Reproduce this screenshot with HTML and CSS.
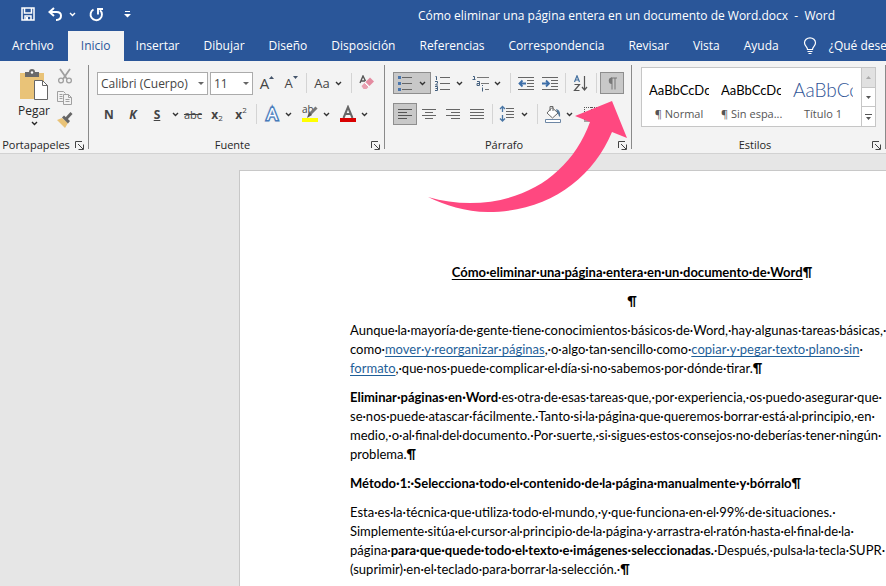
FILE: index.html
```html
<!DOCTYPE html>
<html lang="es">
<head>
    <meta charset="UTF-8">
    <title>Cómo eliminar una página entera en un documento de Word.docx - Word</title>
    <link rel="stylesheet" href="styles.css">
</head>
<body>
    <!-- Iconos compartidos -->
    <svg class="defs" width="0" height="0">
        <symbol id="chevron" viewBox="0 0 7 5"><path d="M1 1l2.5 2.5L6 1" fill="none" stroke="currentColor" stroke-width="1.4"/></symbol>
        <symbol id="launcher" viewBox="0 0 9 9"><path d="M.5 7V.5H7M3 3l5 5M8.5 3.5v5h-5" fill="none" stroke="#444"/></symbol>
    </svg>

    <header class="header">
        <div class="titlebar">
            <div class="quick">
                <button class="quick-btn" aria-label="Guardar"><svg width="14" height="14" viewBox="0 0 14 14"><path d="M1 1h12v12H1zM3.500 1v5h7V1M4 13V9h6v4" fill="none" stroke="#fff" stroke-width="1.500"/><path d="M5 10h2v3H5z" fill="#fff"/></svg></button>
                <button class="quick-btn undo" aria-label="Deshacer"><svg width="15" height="14" viewBox="0 0 15 14"><path d="M6 1L1.500 5 6 9M2 5h6.500c6 0 6 7.500 0 8H8" fill="none" stroke="#fff" stroke-width="2"/></svg><svg class="chev"><use href="#chevron"/></svg></button>
                <button class="quick-btn" aria-label="Repetir"><svg width="15" height="15" viewBox="0 0 15 15"><path d="M4.500 2.500A5.700 5.700 0 1 0 11 3.200M9 7.500V2h5" fill="none" stroke="#fff" stroke-width="1.900"/></svg></button>
                <button class="quick-btn" aria-label="Personalizar"><svg width="7" height="7" viewBox="0 0 7 7"><path d="M1 0h5v1H1zM0 3h7L3.500 6.500z" fill="#fff"/></svg></button>
            </div>
            <span class="doc-name">Cómo eliminar una página entera en un documento de Word.docx&nbsp; -&nbsp; Word</span>
        </div>
        <nav class="tabs">
            <button class="tab file">Archivo</button>
            <button class="tab active">Inicio</button>
            <button class="tab">Insertar</button>
            <button class="tab">Dibujar</button>
            <button class="tab">Diseño</button>
            <button class="tab">Disposición</button>
            <button class="tab">Referencias</button>
            <button class="tab">Correspondencia</button>
            <button class="tab">Revisar</button>
            <button class="tab">Vista</button>
            <button class="tab">Ayuda</button>
            <button class="tab help"><svg width="14" height="18" viewBox="0 0 14 18"><path d="M4.500 12.500C4.500 9.500 1.500 9 1.500 5.800a5.500 5 0 0 1 11 0c0 3.200-3 3.700-3 6.700zM4.500 14.500h5M5.500 16.500h3" fill="none" stroke="#fff" stroke-width="1.200"/></svg>¿Qué desea hacer?</button>
        </nav>
    </header>

    <section class="ribbon">
        <div class="group clipboard">
            <div class="clip-tools">
                <button class="paste">
                    <svg width="30" height="32" viewBox="0 0 30 32"><path d="M1 4h24v26H1z" fill="#e9c378"/><path d="M6 3h4a3 3 0 0 1 6 0h4v5H6z" fill="#6a6a6a"/><circle cx="13" cy="3.500" r="1.200" fill="#fff"/><path d="M15.500 11.500h8l5 5v14h-13z" fill="#fff" stroke="#666"/><path d="M23.500 11.500v5h5" fill="none" stroke="#666"/></svg>
                    Pegar
                    <svg class="chev"><use href="#chevron"/></svg>
                </button>
                <div class="clip-side">
                    <button class="btn" aria-label="Cortar"><svg width="16" height="16" viewBox="0 0 16 16"><path d="M3 1l7 10M13 1L6 11" stroke="#a0a0a0" stroke-width="1.800"/><circle cx="4" cy="12.500" r="2.400" fill="none" stroke="#a0a0a0" stroke-width="1.300"/><circle cx="12" cy="12.500" r="2.400" fill="none" stroke="#a0a0a0" stroke-width="1.300"/></svg></button>
                    <button class="btn" aria-label="Copiar"><svg width="16" height="16" viewBox="0 0 16 16"><path d="M6 11.500H.500v-10h6l2 2M2.500 4.500h3M2.500 6.500h3M2.500 8.500h3" fill="none" stroke="#a0a0a0"/><path d="M6.500 4.500h5l3 3v7h-8z" fill="#f3f3f3" stroke="#a0a0a0"/><path d="M11.500 4.500v3h3M8.500 9.500h4M8.500 11.500h4" fill="none" stroke="#a0a0a0"/></svg></button>
                    <button class="btn" aria-label="Copiar formato"><svg width="16" height="16" viewBox="0 0 16 16"><path d="M0 8l5-2 6 5-3 5z" fill="#e9c378"/><path d="M5 5.500l2-2 6 5.500-2 2.500z" fill="#666"/><path d="M9 7l5.500-6" stroke="#666" stroke-width="2.800"/></svg></button>
                </div>
            </div>
            <div class="group-foot"><span>Portapapeles</span><button class="launch" aria-label="Más opciones"><svg width="9" height="9"><use href="#launcher"/></svg></button></div>
        </div>

        <div class="group font">
            <div class="row">
                <label class="combo combo-font"><select aria-label="Fuente"><option>Calibri (Cuerpo)</option></select></label>
                <label class="combo combo-size"><select aria-label="Tamaño"><option>11</option></select></label>
                <button class="btn grow">A<svg width="5" height="3"><path d="M0 3l2.500-3L5 3z" fill="#44546a"/></svg></button>
                <button class="btn grow shrink">A<svg width="5" height="3"><path d="M0 0l2.500 3L5 0z" fill="#44546a"/></svg></button>
                <i class="sep"></i>
                <button class="split case"><span class="ico">Aa</span><svg class="chev"><use href="#chevron"/></svg></button>
                <i class="sep"></i>
                <button class="btn" aria-label="Borrar formato"><svg width="16" height="16" viewBox="0 0 16 16"><path d="M1 8l3-7 2.500 5M2 6h4" fill="none" stroke="#555" stroke-width="1.400"/><path d="M11 2.500l4 4-4.500 4.500-4-4z" fill="#e48ba0"/><path d="M6 7.500l4 4-2.500 2.500h-3L2.500 11z" fill="#e8a0b0"/><path d="M5.500 7.500l4.500 4.500" stroke="#fff"/></svg></button>
            </div>
            <div class="row">
                <button class="btn"><b>N</b></button>
                <button class="btn"><b><em>K</em></b></button>
                <button class="btn under"><b>S</b></button>
                <button class="drop" aria-label="Subrayado"><svg class="chev"><use href="#chevron"/></svg></button>
                <button class="btn strike">abc</button>
                <button class="btn"><b>x</b><sub>2</sub></button>
                <button class="btn"><b>x</b><sup>2</sup></button>
                <i class="sep"></i>
                <button class="split"><span class="ico effect">A</span><svg class="chev"><use href="#chevron"/></svg></button>
                <button class="split" aria-label="Resaltado"><svg width="24" height="18" viewBox="0 0 24 18"><text x="4" y="8" class="mini">ab</text><path d="M4 13h16v4H4z" fill="#ff0"/><path d="M18.500 2.500l-7 7" stroke="#777" stroke-width="3"/><path d="M11 7l3 3-5 3z" fill="#555"/></svg><svg class="chev"><use href="#chevron"/></svg></button>
                <button class="split" aria-label="Color de fuente"><svg width="24" height="18" viewBox="0 0 24 18"><path d="M7.500 13L12 2l4.500 11M9 9h6" fill="none" stroke="#666" stroke-width="2"/><path d="M4 13h16v4H4z" fill="#d90000"/></svg><svg class="chev"><use href="#chevron"/></svg></button>
            </div>
            <div class="group-foot"><span>Fuente</span><button class="launch" aria-label="Más opciones"><svg width="9" height="9"><use href="#launcher"/></svg></button></div>
        </div>

        <div class="group paragraph">
            <div class="row">
                <button class="split on" aria-label="Viñetas"><svg width="24" height="16" viewBox="0 0 24 16"><path d="M8 2.500h10M8 8.500h10M8 14.500h10" stroke="#666"/><path d="M4 1h3v3H4zM4 7h3v3H4zM4 13h3v3H4z" fill="#4a76ad"/></svg><svg class="chev"><use href="#chevron"/></svg></button>
                <button class="split" aria-label="Numeración"><svg width="24" height="16" viewBox="0 0 24 16"><path d="M9 2.500h10M9 8.500h10M9 14.500h10" stroke="#666"/><path d="M4.500 1.500h1V5M4 6.500h2.500v1.500L4.500 10H7M4 11.500h2.500v4H4M4.500 13.500h2" fill="none" stroke="#44607f"/></svg><svg class="chev"><use href="#chevron"/></svg></button>
                <button class="split" aria-label="Lista multinivel"><svg width="24" height="17" viewBox="0 0 24 17"><path d="M8 2.500h12M12 8.500h8M16 14.500h4" stroke="#777"/><path d="M4 1.500h1.500V4M3.500 4.500h3M8 6.500h2.500v4H8v-2h2M13.500 12.500v4M13.500 10v1" fill="none" stroke="#44607f"/></svg><svg class="chev"><use href="#chevron"/></svg></button>
                <i class="sep"></i>
                <button class="btn" aria-label="Disminuir sangría"><svg width="16" height="14" viewBox="0 0 16 14"><path d="M0 1.500h16M9 4.500h7M9 7.500h7M9 10.500h7M0 13.500h16" stroke="#666"/><path d="M8 7.500H2M4.500 4.500l-3 3 3 3" fill="none" stroke="#3d6ea8" stroke-width="1.800"/></svg></button>
                <button class="btn" aria-label="Aumentar sangría"><svg width="16" height="14" viewBox="0 0 16 14"><path d="M0 1.500h16M9 4.500h7M9 7.500h7M9 10.500h7M0 13.500h16" stroke="#666"/><path d="M0 7.500h6M4 4.500l3 3-3 3" fill="none" stroke="#3d6ea8" stroke-width="1.800"/></svg></button>
                <i class="sep"></i>
                <button class="btn" aria-label="Ordenar"><svg width="16" height="17" viewBox="0 0 16 17"><path d="M1.500 7L4 .8 6.500 7M2.300 5h3.400" fill="none" stroke="#44709f" stroke-width="1.200"/><path d="M1.500 9.500h5l-5 6h5" fill="none" stroke="#555" stroke-width="1.200"/><path d="M11.500 1v14M9 12l2.500 3 2.500-3" fill="none" stroke="#555" stroke-width="1.200"/></svg></button>
                <i class="sep"></i>
                <button class="btn on" aria-label="Mostrar todo"><svg width="12" height="13" viewBox="0 0 12 13"><path d="M6 1v11.500M9 1v11.500M5 1h6" fill="none" stroke="#777"/><path d="M6 .500v6.500a3.200 3.200 0 0 1 0-6.500z" fill="#777"/></svg></button>
            </div>
            <div class="row">
                <button class="btn on" aria-label="Alinear a la izquierda"><svg width="14" height="12" viewBox="0 0 14 12"><path d="M0 1.500h14M0 4.500h9M0 7.500h14M0 10.500h9" stroke="#555"/></svg></button>
                <button class="btn" aria-label="Centrar"><svg width="14" height="12" viewBox="0 0 14 12"><path d="M0 1.500h14M3 4.500h8M0 7.500h14M3 10.500h8" stroke="#666"/></svg></button>
                <button class="btn" aria-label="Alinear a la derecha"><svg width="14" height="12" viewBox="0 0 14 12"><path d="M0 1.500h14M5 4.500h9M0 7.500h14M5 10.500h9" stroke="#666"/></svg></button>
                <button class="btn" aria-label="Justificar"><svg width="14" height="12" viewBox="0 0 14 12"><path d="M0 1.500h14M0 4.500h14M0 7.500h14M0 10.500h14" stroke="#666"/></svg></button>
                <i class="sep"></i>
                <button class="split" aria-label="Interlineado"><svg width="24" height="18" viewBox="0 0 24 18"><path d="M10 3.500h8M10 6.500h8M10 9.500h8M10 12.500h8" stroke="#666"/><path d="M6.500 2v5M4 4l2.500-2.500L9 4M6.500 10v6M4 13.500L6.500 16 9 13.500" fill="none" stroke="#4a76a5" stroke-width="1.300"/></svg><svg class="chev"><use href="#chevron"/></svg></button>
                <i class="sep"></i>
                <button class="split" aria-label="Sombreado"><svg width="24" height="18" viewBox="0 0 24 18"><path d="M11 2.500l6 5.500-5.500 5L6 8zM9 6V1.500h3V6" fill="#fff" stroke="#666"/><path d="M15 4c4 1 4.500 4 4 8-2-1-1-3-3-5z" fill="#54789a"/><path d="M4.500 14.500h15v3h-15z" fill="#fff" stroke="#6d87a5"/></svg><svg class="chev"><use href="#chevron"/></svg></button>
                <button class="split" aria-label="Bordes"><svg width="24" height="16" viewBox="0 0 24 16"><path d="M5 1.500h14M5 8.500h14M5.500 1v14M12.500 1v14" stroke="#555" stroke-dasharray="1 1"/><path d="M5 15h14" stroke="#555"/></svg></button>
            </div>
            <div class="group-foot"><span>Párrafo</span><button class="launch" aria-label="Más opciones"><svg width="9" height="9"><use href="#launcher"/></svg></button></div>
        </div>

        <div class="group styles">
            <div class="gallery">
                <div class="cards">
                    <button class="card"><span class="sample">AaBbCcDc</span><span class="name">¶ Normal</span></button>
                    <button class="card"><span class="sample">AaBbCcDc</span><span class="name">¶ Sin espa...</span></button>
                    <button class="card"><span class="sample big">AaBbCc</span><span class="name">Título 1</span></button>
                </div>
                <div class="scroll">
                    <button class="scroll-btn off" aria-label="Subir"><svg width="5" height="3"><path d="M0 3l2.500-3L5 3z" fill="#aaa"/></svg></button>
                    <button class="scroll-btn" aria-label="Bajar"><svg width="5" height="3"><path d="M0 0l2.500 3L5 0z" fill="#555"/></svg></button>
                    <button class="scroll-btn" aria-label="Más estilos"><svg width="7" height="6"><path d="M0 0h7v1H0zM1 3l2.500 3L6 3z" fill="#555"/></svg></button>
                </div>
            </div>
            <div class="group-foot"><span>Estilos</span><button class="launch" aria-label="Más opciones"><svg width="9" height="9"><use href="#launcher"/></svg></button></div>
        </div>
    </section>

    <main class="workspace">
        <article class="page">
            <h1><u>Cómo·eliminar·una·página·entera·en·un·documento·de·Word</u>¶</h1>
            <p class="center"><b>¶</b></p>
            <p>Aunque·la·mayoría·de·gente·tiene·conocimientos·básicos·de·Word,·hay·algunas·tareas·básicas,·<br>como·<a href="#">mover·y·reorganizar·páginas</a>,·o·algo·tan·sencillo·como·<a href="#">copiar·y·pegar·texto·plano·sin</a>·<br><a href="#">formato</a>,·que·nos·puede·complicar·el·día·si·no·sabemos·por·dónde·tirar.<b>¶</b></p>
            <p><b>Eliminar·páginas·en·Word</b>·es·otra·de·esas·tareas·que,·por·experiencia,·os·puedo·asegurar·que·<br>se·nos·puede·atascar·fácilmente.·Tanto·si·la·página·que·queremos·borrar·está·al·principio,·en·<br>medio,·o·al·final·del·documento.·Por·suerte,·si·sigues·estos·consejos·no·deberías·tener·ningún·<br>problema.<b>¶</b></p>
            <p><b>Método·1:·Selecciona·todo·el·contenido·de·la·página·manualmente·y·bórralo¶</b></p>
            <p>Esta·es·la·técnica·que·utiliza·todo·el·mundo,·y·que·funciona·en·el·99%·de·situaciones.·<br>Simplemente·sitúa·el·cursor·al·principio·de·la·página·y·arrastra·el·ratón·hasta·el·final·de·la·<br>página·<b>para·que·quede·todo·el·texto·e·imágenes·seleccionadas.</b>·Después,·pulsa·la·tecla·SUPR·<br>(suprimir)·en·el·teclado·para·borrar·la·selección.·<b>¶</b></p>
        </article>
    </main>

    <!-- Flecha que señala el botón de marcas de párrafo -->
    <svg class="arrow" width="202" height="114" viewBox="0 0 202 114"><path d="M1 97C15 101 29 103 43 103C100 103 145 72 163 22L148 16L185 1L200 38L185 32C165 80 120 112 61 112C38 112 18 105 1 97z" fill="#ff4880"/></svg>
</body>
</html>
```

FILE: styles.css
```css
* {
    box-sizing: border-box;
}

body {
    margin: 0;
    height: 100vh;
    display: flex;
    flex-direction: column;
    overflow: hidden;
    position: relative;
    font-family: "Open Sans", "Noto Sans", sans-serif;
    font-size: 12px;
    color: #262626;
    background: #e6e6e6;
}

button,
select {
    font: inherit;
    color: inherit;
    background: none;
    border: 0;
    padding: 0;
    white-space: nowrap;
}

svg {
    flex: none;
}

.defs {
    position: absolute;
}

.chev {
    width: 7px;
    height: 5px;
}

/* Cabecera */
.header {
    background: #2a5699;
    color: #fff;
}

.titlebar {
    display: flex;
    justify-content: space-between;
    height: 31px;
    padding: 0 51px 0 16px;
}

.quick {
    display: flex;
    align-items: center;
    gap: 7px;
    height: 28px;
}

.quick-btn {
    display: flex;
    align-items: center;
    justify-content: center;
    gap: 6px;
    width: 24px;
}

.undo {
    width: 30px;
}

.doc-name {
    line-height: 32px;
    white-space: pre;
}

.tabs {
    display: flex;
    height: 30px;
    overflow: hidden;
}

.tab {
    flex: none;
    padding: 0 12px;
    line-height: 30px;
}

.file {
    padding-right: 14px;
}

.active {
    padding: 0 13px;
    background: #f3f3f3;
    color: #2a5699;
}

.help {
    display: flex;
    align-items: center;
    gap: 12px;
}

/* Cinta de opciones */
.ribbon {
    display: flex;
    flex: none;
    height: 93px;
    padding-top: 4px;
    background: #f3f3f3;
    border-bottom: 1px solid #d2d2d2;
}

.group {
    display: flex;
    flex-direction: column;
    gap: 9px;
    flex: none;
    height: 84px;
    padding: 7px 0 0 8px;
    border-right: 1px solid #8a8a8a;
    color: #444;
}

.clipboard {
    gap: 0;
    width: 89px;
    padding: 0;
}

.font {
    width: 296px;
}

.paragraph {
    width: 247px;
}

.styles {
    width: 254px;
    padding: 2px 0 0 9px;
}

.group-foot {
    display: flex;
    align-items: center;
    margin-top: auto;
    margin-bottom: -4px;
    font-size: 11px;
    line-height: 16px;
    color: #262626;
}

.group-foot span {
    flex: 1;
    text-align: center;
}

.launch {
    display: flex;
    width: 16px;
    padding-left: 3px;
}

.clip-tools {
    display: flex;
    padding-left: 17px;
}

.paste {
    display: flex;
    flex-direction: column;
    align-items: center;
    width: 34px;
    padding-top: 4px;
    line-height: 20px;
    color: #262626;
}

.clip-side .btn {
    width: 28px;
}

.row {
    display: flex;
    align-items: center;
    height: 22px;
}

.btn,
.split,
.drop {
    display: flex;
    align-items: center;
    justify-content: center;
    flex: none;
    height: 22px;
}

.btn {
    width: 24px;
}

.split {
    width: 38px;
    justify-content: flex-start;
}

.drop {
    width: 12px;
}

.split .chev,
.drop .chev {
    color: #333;
    margin-left: 1px;
}

.on {
    background: #c8c8c8;
    border: 1px solid #8e8e8e;
}

.sep {
    width: 1px;
    height: 20px;
    margin: 0 3px;
    background: #d4d4d4;
}

.combo {
    position: relative;
    margin-right: 2px;
}

.combo select {
    appearance: none;
    width: 100%;
    height: 23px;
    padding-left: 3px;
    background: #fff;
    border: 1px solid #ababab;
    border-radius: 0;
}

.combo::after {
    content: "";
    position: absolute;
    right: 4px;
    top: 10px;
    border: 3px solid transparent;
    border-top-color: #666;
}

.combo-font {
    width: 111px;
}

.combo-size {
    width: 43px;
}

.grow {
    font-size: 15px;
}

.shrink {
    font-size: 13px;
}

.grow svg {
    align-self: flex-start;
    margin-top: 4px;
}

.ico {
    width: 24px;
    text-align: center;
}

.case {
    font-size: 13px;
}

.under {
    text-decoration: underline;
}

.strike {
    font-size: 11px;
    text-decoration: line-through;
}

sub,
sup {
    font-size: 8px;
    line-height: 8px;
}

sub {
    align-self: flex-end;
    padding-bottom: 3px;
}

sup {
    align-self: flex-start;
    padding-top: 3px;
}

.effect {
    font-size: 17px;
    line-height: 20px;
    color: #fff;
    -webkit-text-stroke: 3px #3f74b5;
    paint-order: stroke fill;
    text-shadow: 0 0 3px #8ab4e0;
}

.mini {
    font-size: 10px;
    fill: #444;
}

/* Galería de estilos */
.gallery {
    display: flex;
    width: 235px;
    height: 60px;
    background: #fff;
    border: 1px solid #c6c6c6;
}

.cards {
    display: flex;
    flex: 1;
    padding-left: 1px;
}

.card {
    width: 72px;
    padding: 0 6px;
    overflow: hidden;
}

.sample,
.name {
    display: block;
    overflow: hidden;
}

.sample {
    height: 24px;
    margin-top: 10px;
    line-height: 24px;
    font-family: Lato, sans-serif;
    font-size: 13px;
    text-align: left;
    color: #000;
}

.big {
    font-size: 19px;
    font-weight: 300;
    color: #2f5496;
}

.name {
    font-size: 11px;
    line-height: 24px;
    color: #555;
    overflow: visible;
}

.scroll {
    display: flex;
    flex-direction: column;
    width: 14px;
    border-left: 1px solid #c6c6c6;
}

.scroll-btn {
    display: flex;
    flex: 1;
    align-items: center;
    justify-content: center;
}

.scroll-btn + .scroll-btn {
    border-top: 1px solid #c6c6c6;
}

.off {
    background: #e1e1e1;
}

/* Documento */
.workspace {
    flex: 1;
    min-height: 0;
    padding: 16px 0 0 239px;
    overflow: hidden;
}

.page {
    width: 786px;
    min-height: 1110px;
    padding: 92px 110px;
    background: #fff;
    border: 1px solid #c8c8c8;
    font-family: Lato, sans-serif;
    font-size: 13px;
    line-height: 19px;
    color: #000;
    white-space: nowrap;
}

.page h1,
.page p {
    margin: 0 0 10px;
    font-size: 13px;
}

.page h1,
.center {
    text-align: center;
}

.page a {
    color: #1f5f99;
}

.page u,
.page a {
    text-underline-offset: 2px;
    text-decoration-skip-ink: none;
}

.arrow {
    position: absolute;
    left: 427px;
    top: 100px;
    pointer-events: none;
}
```
